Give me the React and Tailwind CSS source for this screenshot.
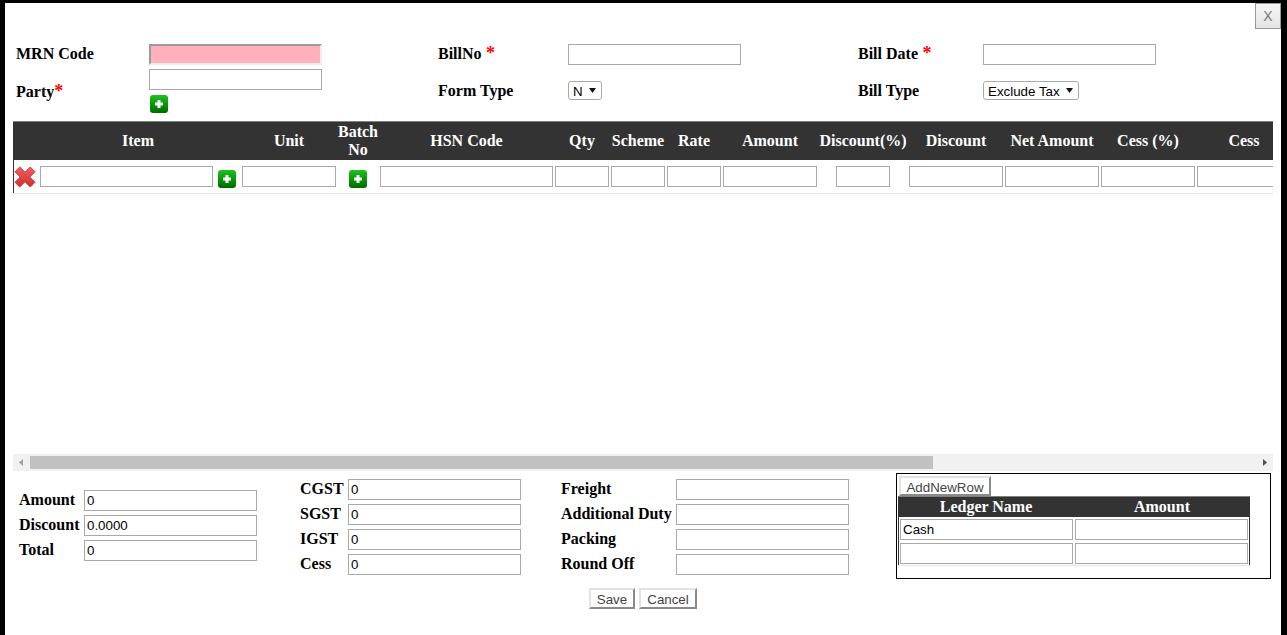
import React from "react";

const SERIF = "font-['Liberation_Serif',serif] font-bold text-[16px]";
const SANS = "font-['Liberation_Sans',sans-serif] text-[13.33px]";
const COLS =
  "grid grid-cols-[24px_204px_96px_42px_175px_56px_56px_56px_96px_90px_96px_96px_96px_96px]";

const HEADERS = [
  "",
  "Item",
  "Unit",
  "Batch No",
  "HSN Code",
  "Qty",
  "Scheme",
  "Rate",
  "Amount",
  "Discount(%)",
  "Discount",
  "Net Amount",
  "Cess (%)",
  "Cess",
];

function Input({ value = "", className = "w-[173px]" }) {
  return (
    <input
      readOnly
      value={value}
      className={`box-border h-[21px] shrink-0 border border-[#a9a9a9] bg-white px-[2px] text-black outline-none ${SANS} ${className}`}
    />
  );
}

function PlusIcon({ className = "" }) {
  return (
    <svg width="18" height="18" viewBox="0 0 18 18" className={`block shrink-0 ${className}`}>
      <defs>
        <linearGradient id="plusGreen" x1="0" y1="0" x2="0" y2="1">
          <stop offset="0" stopColor="#22c022" />
          <stop offset="0.5" stopColor="#069a06" />
          <stop offset="1" stopColor="#006a00" />
        </linearGradient>
      </defs>
      <rect width="18" height="18" rx="3" fill="url(#plusGreen)" />
      <path d="M7.5 5h3v2.5H13v3h-2.5V13h-3v-2.5H5v-3h2.5z" fill="#fff" />
    </svg>
  );
}

function DeleteIcon() {
  return (
    <svg width="22" height="22" viewBox="0 0 23 23" className="block">
      <defs>
        <linearGradient id="xRed" x1="0" y1="0" x2="0" y2="1">
          <stop offset="0" stopColor="#f06060" />
          <stop offset="1" stopColor="#d42c2c" />
        </linearGradient>
      </defs>
      <path
        d="M6 1 11.5 6.5 17 1 22 6 16.5 11.5 22 17 17 22 11.5 16.5 6 22 1 17 6.5 11.5 1 6z"
        fill="url(#xRed)"
        stroke="#c83c3c"
        strokeWidth="1"
        strokeLinejoin="round"
      />
    </svg>
  );
}

function Label({ children, req, className = "" }) {
  return (
    <label className={`${SERIF} pb-[2px] leading-[19px] text-black ${className}`}>
      {children}
      {req && <span className="text-[18px] leading-none text-[#f00]">{req}</span>}
    </label>
  );
}

function OutsetButton({ children, className = "" }) {
  return (
    <button
      type="button"
      className={`box-border border-2 border-t-[#e3e3e3] border-l-[#e3e3e3] border-r-[#8a8a8a] border-b-[#8a8a8a] bg-white pb-[4px] text-[#444] ${SANS} ${className}`}
    >
      {children}
    </button>
  );
}

function Dropdown({ value, className }) {
  return (
    <div className="relative -mt-[1px]">
      <select className={`box-border block h-[19px] appearance-none rounded-[3px] border border-[#a9a9a9] bg-white pb-[1px] pl-[4px] text-black outline-none ${SANS} ${className}`}>
        <option>{value}</option>
      </select>
      <svg width="7" height="5" viewBox="0 0 7 5" className="pointer-events-none absolute top-[7px] right-[6px]">
        <path d="M0 0h7L3.5 5z" fill="#111" />
      </svg>
    </div>
  );
}

function SummaryRow({ label, value, labelWidth }) {
  return (
    <div className="flex items-center">
      <Label className={labelWidth}>{label}</Label>
      <Input value={value} />
    </div>
  );
}

function LedgerRow({ value = "" }) {
  return (
    <div className="flex h-[24px] items-center gap-[2px] border-x border-x-[#333] pl-[1px]">
      <Input value={value} />
      <Input />
    </div>
  );
}

export default function App() {
  return (
    <div className="h-[635px] w-full overflow-hidden bg-black pt-[3px] pl-[5px] pr-[6px]">
      <div className="relative h-[632px] bg-white">
        <button
          type="button"
          className="absolute top-0 right-0 h-[26px] w-[26px] border border-[#999] bg-gradient-to-b from-[#f6f6f6] to-[#e4e4e4] font-['Liberation_Sans',sans-serif] text-[14px] text-[#777]"
        >
          X
        </button>

        {/* bill form */}
        <div className="grid grid-cols-[133px_289px_130px_290px_125px_1fr] gap-y-[4px] pt-[41px] pl-[11px]">
          <Label className="self-center">MRN Code</Label>
          <input
            readOnly
            className="box-border h-[21px] w-[173px] border-2 border-t-[#9a9a9a] border-l-[#9a9a9a] border-r-[#eeeeee] border-b-[#eeeeee] bg-[#ffb0bc] outline-none"
          />
          <Label req=" *" className="self-center">BillNo</Label>
          <Input />
          <Label req=" *" className="self-center">Bill Date</Label>
          <Input />

          <Label req="*" className="mt-[2px] self-center">Party</Label>
          <div className="flex flex-col items-start gap-[5px]">
            <Input />
            <PlusIcon className="ml-[1px]" />
          </div>
          <Label className="self-center">Form Type</Label>
          <div className="flex items-center">
            <Dropdown value="N" className="w-[34px]" />
          </div>
          <Label className="self-center">Bill Type</Label>
          <div className="flex items-center">
            <Dropdown value="Exclude Tax" className="w-[96px]" />
          </div>
        </div>

        {/* item grid */}
        <div className="mt-[8px] ml-[8px] w-[1260px]">
          <div className="h-[333px] overflow-hidden">
            <div className={`${COLS} box-border h-[39px] w-[1279px] items-center border-t border-t-[#808080] bg-[#333] text-center leading-[18px] text-white ${SERIF}`}>
              {HEADERS.map((h, i) => (
                <div key={i} className={h === "Batch No" ? "" : h === "Item" ? "pr-[2px]" : "whitespace-nowrap"}>
                  {h}
                </div>
              ))}
            </div>
            <div className={`${COLS} box-border h-[34px] w-[1279px] items-center border-b border-b-[#e5e5e5] shadow-[inset_1px_0_0_#333]`}>
              <div className="pl-[1px]">
                <DeleteIcon />
              </div>
              <div className="flex items-center pl-[3px]">
                <Input />
                <PlusIcon className="mt-[5px] ml-[5px]" />
              </div>
              <div className="flex justify-center">
                <Input className="w-[94px]" />
              </div>
              <div className="flex justify-center">
                <PlusIcon className="mt-[5px]" />
              </div>
              <div className="flex justify-center">
                <Input />
              </div>
              <div className="flex justify-center">
                <Input className="w-[54px]" />
              </div>
              <div className="flex justify-center">
                <Input className="w-[54px]" />
              </div>
              <div className="flex justify-center">
                <Input className="w-[54px]" />
              </div>
              <div className="flex justify-center">
                <Input className="w-[94px]" />
              </div>
              <div className="flex justify-center">
                <Input className="w-[54px]" />
              </div>
              <div className="flex justify-center">
                <Input className="w-[94px]" />
              </div>
              <div className="flex justify-center">
                <Input className="w-[94px]" />
              </div>
              <div className="flex justify-center">
                <Input className="w-[94px]" />
              </div>
              <div className="flex justify-center">
                <Input className="w-[94px]" />
              </div>
            </div>
          </div>

          {/* horizontal scrollbar */}
          <div className="flex h-[17px] items-center justify-between bg-[#f1f1f1]">
            <svg width="17" height="17" viewBox="0 0 17 17" className="shrink-0">
              <path d="M6 8.5 10 5v7z" fill="#a3a3a3" />
            </svg>
            <div className="h-[13px] w-[903px] bg-[#c1c1c1]" />
            <div className="flex-1" />
            <svg width="17" height="17" viewBox="0 0 17 17" className="shrink-0">
              <path d="M11 8.5 7 5v7z" fill="#505050" />
            </svg>
          </div>
        </div>

        {/* totals */}
        <div className="mt-[2px] flex items-start pl-[14px]">
          <div className="flex w-[238px] flex-col gap-[4px] pt-[17px]">
            <SummaryRow label="Amount" value="0" labelWidth="w-[65px]" />
            <SummaryRow label="Discount" value="0.0000" labelWidth="w-[65px]" />
            <SummaryRow label="Total" value="0" labelWidth="w-[65px]" />
          </div>
          <div className="ml-[43px] flex w-[221px] flex-col gap-[4px] pt-[6px]">
            <SummaryRow label="CGST" value="0" labelWidth="w-[48px]" />
            <SummaryRow label="SGST" value="0" labelWidth="w-[48px]" />
            <SummaryRow label="IGST" value="0" labelWidth="w-[48px]" />
            <SummaryRow label="Cess" value="0" labelWidth="w-[48px]" />
          </div>
          <div className="ml-[40px] flex w-[288px] flex-col gap-[4px] pt-[6px]">
            <SummaryRow label="Freight" labelWidth="w-[115px]" />
            <SummaryRow label="Additional Duty" labelWidth="w-[115px]" />
            <SummaryRow label="Packing" labelWidth="w-[115px]" />
            <SummaryRow label="Round Off" labelWidth="w-[115px]" />
          </div>
          <div className="ml-[47px] box-border h-[106px] w-[375px] border border-black pt-[2px] pl-[1px]">
            <OutsetButton className="ml-[1px] block h-[20px] w-[92px]">AddNewRow</OutsetButton>
            <div className="w-[352px]">
              <div className={`box-border flex h-[21px] items-center border-t border-t-[#808080] bg-[#333] text-center text-white ${SERIF}`}>
                <div className="w-[176px]">Ledger Name</div>
                <div className="w-[176px]">Amount</div>
              </div>
              <LedgerRow value="Cash" />
              <LedgerRow />
              <div className="h-[1px] bg-[#e5e5e5]" />
            </div>
          </div>
        </div>

        <div className="mt-[9px] flex justify-center gap-[4px]">
          <OutsetButton className="h-[21px] w-[46px]">Save</OutsetButton>
          <OutsetButton className="h-[21px] w-[58px]">Cancel</OutsetButton>
        </div>
      </div>
    </div>
  );
}
